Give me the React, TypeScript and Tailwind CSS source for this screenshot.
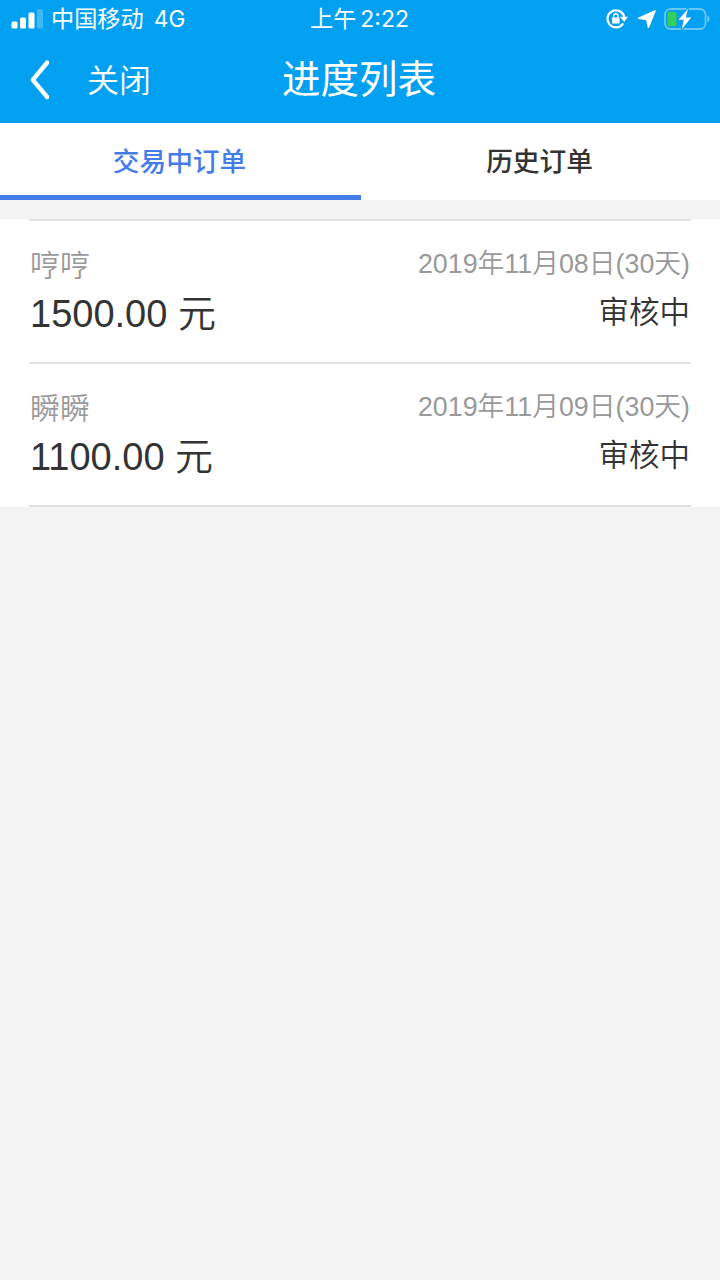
import React, { useState } from "react";

const orders = [
  { id: 1, name: "哼哼", amount: "1500.00", date: "2019年11月08日(30天)", status: "审核中" },
  { id: 2, name: "瞬瞬", amount: "1100.00", date: "2019年11月09日(30天)", status: "审核中" },
];

const tabs = ["交易中订单", "历史订单"];

function StatusBar() {
  return (
    <div className="grid grid-cols-3 items-center h-[38px] pl-[11px] pr-[10px] text-[23.200px] leading-[38px]">
      <div className="flex items-center whitespace-nowrap">
        <svg width="32" height="20" viewBox="0 0 32 20" fill="#fff">
          <rect x="0.5" y="12.500" width="6" height="7" rx="1.500" />
          <rect x="9" y="8.500" width="6" height="11" rx="1.500" />
          <rect x="17.500" y="3.500" width="6" height="16" rx="1.500" />
          <rect x="26" y="0" width="6" height="19.500" rx="1.500" opacity="0.25" />
        </svg>
        <span className="ml-[8px]">中国移动</span>
        <span className="ml-[10px] font-['Inter'] text-[22.700px]">4G</span>
      </div>
      <div className="flex justify-center -ml-0.5 whitespace-nowrap">
        <span>上午</span>
        <span className="ml-1 font-['Inter'] text-[23px]">2:22</span>
      </div>
      <div className="flex justify-end items-center">
        <svg width="22" height="20" viewBox="0 0 22 20" fill="none">
          <path
            d="M16.600 15.200A8.500 8.500 0 1 1 18 7"
            stroke="#fff"
            strokeWidth="2.200"
            strokeLinecap="round"
          />
          <path d="M14 7.800H22L18.200 13Z" fill="#fff" />
          <rect x="6" y="8.600" width="7.600" height="6" rx="0.800" fill="#fff" />
          <path d="M7.600 9V6.900a2.200 2.200 0 0 1 4.400 0V9" stroke="#fff" strokeWidth="1.400" />
        </svg>
        <svg className="ml-[9px]" width="20" height="18" viewBox="0 0 20 18" fill="#fff">
          <path
            d="M18 0.900 1.800 8.200l8 1.300 1.600 7.700Z"
            stroke="#fff"
            strokeWidth="1.600"
            strokeLinejoin="round"
          />
        </svg>
        <svg className="ml-[7px]" width="46" height="22" viewBox="0 0 46 22" fill="none">
          <rect x="1" y="1" width="40.500" height="20" rx="5.500" stroke="#fff" strokeOpacity="0.4" strokeWidth="1.800" />
          <path d="M43.500 7.500c2.600 1 2.600 6 0 7Z" fill="#fff" fillOpacity="0.45" />
          <rect x="3.500" y="3.800" width="9" height="14.400" rx="2" fill="#34d058" />
          <path
            d="M24 0.800 14.500 11.800h5.300L17.800 21.200l9.400-11.700h-5.400Z"
            fill="#fff"
            stroke="#02a0f1"
            strokeWidth="2.400"
            paintOrder="stroke"
          />
        </svg>
      </div>
    </div>
  );
}

export default function App() {
  const [active, setActive] = useState(0);

  return (
    <div className="flex flex-col min-h-screen bg-[#f4f4f4] font-['Liberation_Sans','Noto_Sans_CJK_SC',sans-serif] text-[#333]">
      <header className="h-[123px] bg-[#02a0f1] text-white">
        <StatusBar />
        <div className="grid grid-cols-3 items-center h-[84px]">
          <button className="flex items-center pl-[29px]">
            <svg width="20" height="40" viewBox="0 0 20 40" fill="none">
              <path
                d="M18.200 2.500 3.800 19.800 18.200 37"
                stroke="#fff"
                strokeWidth="4.400"
                strokeLinecap="round"
                strokeLinejoin="round"
              />
            </svg>
            <span className="ml-[38px] pt-[2px] text-[32px] font-[350]">关闭</span>
          </button>
          <h1 className="-ml-0.5 text-center text-[38.500px] whitespace-nowrap">进度列表</h1>
        </div>
      </header>

      <nav className="grid grid-cols-[361px_359px] h-[77px] bg-white">
        {tabs.map((tab, index) => (
          <button
            key={tab}
            onClick={() => setActive(index)}
            className={`pt-[7px] pr-[2px] border-b-[5px] text-[26.700px] font-medium ${
              active === index ? "border-[#457de8] text-[#457de8]" : "border-transparent"
            }`}
          >
            {tab}
          </button>
        ))}
      </nav>

      <ul className="mt-[19px] px-[29px] bg-white">
        {orders.map((order) => (
          <li
            key={order.id}
            className="flex justify-between h-[143px] border-t-2 border-[#e3e3e3] last:h-[145px] last:border-b-2"
          >
            <div className="pt-[22px] pl-px">
              <p className="text-[30px] leading-[46px] font-[350] text-[#999]">{order.name}</p>
              <p className="text-[38px] leading-[52px] -mt-px">
                {order.amount} <span className="font-[350]">元</span>
              </p>
            </div>
            <div className="pt-[20px] pr-px text-right">
              <p className="text-[26.800px] leading-[46px] font-[350] text-[#999]">{order.date}</p>
              <p className="text-[30.500px] leading-[50px] font-[350]">{order.status}</p>
            </div>
          </li>
        ))}
      </ul>
    </div>
  );
}
